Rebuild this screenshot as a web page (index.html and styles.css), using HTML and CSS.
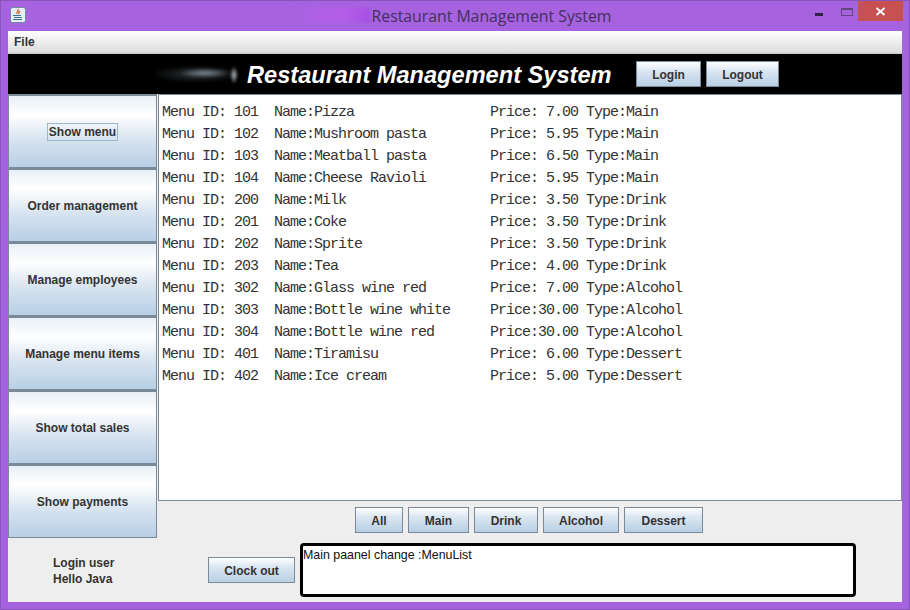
FILE: index.html
```html
<!DOCTYPE html>
<html>

<head>
    <title>Restaurant Management System</title>
    <meta charset="utf-8">
    <link rel="stylesheet" href="styles.css">
</head>

<body>
    <div class="window">
        <div class="titlebar">
            <svg class="javaicon" width="16" height="16" viewBox="0 0 16 16">
                <rect x="0.5" y="0.5" width="15" height="15" rx="2" fill="#e4edf3" stroke="#6f8ba0"/>
                <path d="M8 2c1 2-2 3-1 5M10 4c-1 1-2 2-1 3" fill="none" stroke="#d9541e" stroke-width="1.2"/>
                <path d="M3 8h8v1H3zM4 10h8v1H4zM3 12h9v1H3z" fill="#3f7391"/>
            </svg>
            <div class="titletext">
                <span class="titleblur"></span>
                <span>Restaurant Management System</span>
            </div>
            <div class="winbuttons">
                <span class="winmin"></span>
                <span class="winmax"></span>
                <span class="winclose">
                    <svg width="11" height="9" viewBox="0 0 11 9">
                        <path d="M1.5 1l8 7M9.5 1l-8 7" stroke="#fff" stroke-width="2"/>
                    </svg>
                </span>
            </div>
        </div>

        <div class="client">
            <div class="menubar"><span class="menuitem">File</span></div>

            <div class="header">
                <span class="logoblur"></span>
                <h1 class="apptitle">Restaurant Management System</h1>
                <button class="btn loginbtn" type="button">Login</button>
                <button class="btn logoutbtn" type="button">Logout</button>
            </div>

            <div class="main">
                <div class="leftcol">
                    <div class="sidebar">
                        <button class="btn sidebtn" type="button"><span class="focused">Show menu</span></button>
                        <button class="btn sidebtn" type="button">Order management</button>
                        <button class="btn sidebtn" type="button">Manage employees</button>
                        <button class="btn sidebtn" type="button">Manage menu items</button>
                        <button class="btn sidebtn" type="button">Show total sales</button>
                        <button class="btn sidebtn" type="button">Show payments</button>
                    </div>
                    <div class="loginuser">
                        <div>Login user</div>
                        <div>Hello Java</div>
                    </div>
                </div>

                <div class="rightcol">
                    <pre class="menulist">Menu ID: 101  Name:Pizza                 Price: 7.00 Type:Main
Menu ID: 102  Name:Mushroom pasta        Price: 5.95 Type:Main
Menu ID: 103  Name:Meatball pasta        Price: 6.50 Type:Main
Menu ID: 104  Name:Cheese Ravioli        Price: 5.95 Type:Main
Menu ID: 200  Name:Milk                  Price: 3.50 Type:Drink
Menu ID: 201  Name:Coke                  Price: 3.50 Type:Drink
Menu ID: 202  Name:Sprite                Price: 3.50 Type:Drink
Menu ID: 203  Name:Tea                   Price: 4.00 Type:Drink
Menu ID: 302  Name:Glass wine red        Price: 7.00 Type:Alcohol
Menu ID: 303  Name:Bottle wine white     Price:30.00 Type:Alcohol
Menu ID: 304  Name:Bottle wine red       Price:30.00 Type:Alcohol
Menu ID: 401  Name:Tiramisu              Price: 6.00 Type:Dessert
Menu ID: 402  Name:Ice cream             Price: 5.00 Type:Dessert</pre>

                    <div class="filters">
                        <button class="btn filter-all" type="button">All</button>
                        <button class="btn filter-main" type="button">Main</button>
                        <button class="btn filter-drink" type="button">Drink</button>
                        <button class="btn filter-alcohol" type="button">Alcohol</button>
                        <button class="btn filter-dessert" type="button">Dessert</button>
                    </div>

                    <div class="bottomrow">
                        <button class="btn clockout" type="button">Clock out</button>
                        <div class="logbox">Main paanel change :MenuList</div>
                    </div>
                </div>
            </div>
        </div>
    </div>
</body>

</html>
```

FILE: styles.css
```css
html,
body {
    margin: 0;
    padding: 0;
    overflow: hidden;
}

* {
    box-sizing: border-box;
}

.window {
    width: 910px;
    height: 610px;
    background-color: #a763df;
    border: 1px solid #8a55bb;
    display: flex;
    flex-direction: column;
    font-family: "Liberation Sans", Arial, sans-serif;
}

.titlebar {
    height: 30px;
    display: flex;
    align-items: flex-start;
    flex-shrink: 0;
}

.javaicon {
    margin: 6px 0 0 9px;
}

.titletext {
    flex: 1;
    display: flex;
    align-items: center;
    justify-content: center;
    height: 30px;
    padding-left: 65px;
    font-family: "Open Sans", sans-serif;
    font-size: 15.8px;
    color: #43305e;
}

.titleblur {
    width: 75px;
    height: 15px;
    margin: -2px 2px 0 0;
    background: linear-gradient(to right, #a763df, #b05ee6 35%, #b25de8 70%, #a650e6);
    filter: blur(1px);
}

.winbuttons {
    display: flex;
    align-items: flex-start;
    margin-right: 6px;
}

.winmin {
    width: 8px;
    height: 3px;
    margin: 12px 18px 0 0;
    background-color: #2e2440;
}

.winmax {
    width: 12px;
    height: 8px;
    margin: 7px 5px 0 0;
    border: 1px solid #5f4a80;
    border-top-width: 2px;
}

.winclose {
    width: 45px;
    height: 20px;
    background-color: #c75050;
    display: flex;
    align-items: center;
    justify-content: center;
}

.client {
    flex: 1;
    margin: 0 7px 7px 7px;
    background-color: #eeeeee;
    display: flex;
    flex-direction: column;
    min-height: 0;
}

.menubar {
    height: 23px;
    background: linear-gradient(to bottom, #ffffff, #dcdcdc);
    border-bottom: 1px solid #c8c8c8;
    padding: 1px 0 0 6px;
    flex-shrink: 0;
}

.menuitem {
    font-size: 12px;
    font-weight: bold;
    color: #333333;
}

.header {
    height: 40px;
    background-color: #000000;
    display: flex;
    align-items: center;
    flex-shrink: 0;
    padding-left: 127px;
}

.logoblur {
    width: 104px;
    height: 22px;
    margin-right: 8px;
    background:
        radial-gradient(ellipse 4px 9px at 99px 12px, #b4bec4, transparent),
        radial-gradient(ellipse 26px 5px at 70px 10px, #7a848a, transparent),
        radial-gradient(ellipse 46px 9px at 62px 11px, #2c3438, transparent);
    filter: blur(1px);
}

.apptitle {
    margin: 2px 24px 0 0;
    width: 365px;
    font-size: 23.6px;
    font-weight: bold;
    font-style: italic;
    color: #ffffff;
    white-space: nowrap;
}

.btn {
    font-family: "Liberation Sans", Arial, sans-serif;
    font-size: 12px;
    font-weight: bold;
    color: #333333;
    padding: 1px 0 0 0;
    border: 1px solid #7a8a99;
    border-radius: 0;
    background: linear-gradient(to bottom, #ffffff 0%, #dce7f2 35%, #b8cfe5 100%);
    height: 26px;
    flex-shrink: 0;
}

.loginbtn {
    width: 65px;
    margin-right: 5px;
}

.logoutbtn {
    width: 73px;
}

.main {
    flex: 1;
    display: flex;
    min-height: 0;
    background-color: #eeeeee;
}

.leftcol {
    width: 149px;
    display: flex;
    flex-direction: column;
    flex-shrink: 0;
}

.sidebar {
    display: flex;
    flex-direction: column;
}

.sidebtn {
    height: 74px;
    width: 149px;
    padding: 0;
    border-top-width: 2px;
    background: linear-gradient(to bottom, #e8f0f7 0%, #ffffff 27%, #d8e4f0 60%, #b8cfe5 100%);
}

.focused {
    border: 1px solid #9fb6cf;
    padding: 1px;
}

.loginuser {
    padding: 17px 0 0 45px;
    font-size: 12px;
    font-weight: bold;
    color: #333333;
    line-height: 16px;
}

.rightcol {
    flex: 1;
    display: flex;
    flex-direction: column;
    min-width: 0;
    padding-left: 1px;
}

.menulist {
    margin: 0;
    height: 407px;
    background-color: #ffffff;
    border: 1px solid #7a8a99;
    padding: 7px 0 0 3px;
    font-family: "Liberation Mono", monospace;
    font-size: 15px;
    letter-spacing: -1px;
    line-height: 22px;
    color: #333333;
    flex-shrink: 0;
}

.filters {
    display: flex;
    justify-content: center;
    gap: 5px;
    padding: 6px 2px 0 0;
    height: 42px;
    flex-shrink: 0;
}

.filter-all {
    width: 48px;
}

.filter-main {
    width: 61px;
}

.filter-drink {
    width: 64px;
}

.filter-alcohol {
    width: 76px;
}

.filter-dessert {
    width: 79px;
}

.bottomrow {
    display: flex;
    align-items: center;
    padding-left: 50px;
    height: 54px;
}

.clockout {
    width: 87px;
    margin-right: 5px;
}

.logbox {
    width: 556px;
    height: 54px;
    background-color: #ffffff;
    border: 3px solid #000000;
    border-radius: 4px;
    padding: 2px 0 0 0;
    font-size: 12.4px;
    color: #111111;
}
```
